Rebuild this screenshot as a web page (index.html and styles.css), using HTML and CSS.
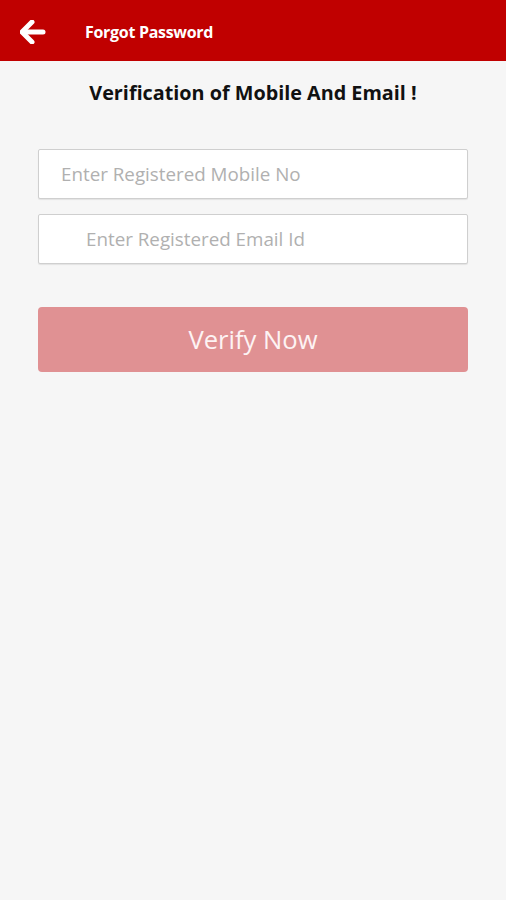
FILE: index.html
```html
<!DOCTYPE html>
<html lang="en">
<head>
    <meta charset="UTF-8">
    <meta name="viewport" content="width=device-width, initial-scale=1.0">
    <title>Forgot Password</title>
    <link rel="stylesheet" href="styles.css">
</head>
<body>
    <header class="topbar">
        <button class="back-btn" aria-label="Back">
            <svg width="26" height="24" viewBox="0 0 26 24">
                <path d="M12 2 L2 12 L12 22" fill="none" stroke="#fff" stroke-width="5" stroke-linecap="round" stroke-linejoin="round"/>
                <path d="M4 12 H23" fill="none" stroke="#fff" stroke-width="5" stroke-linecap="round"/>
            </svg>
        </button>
        <span class="topbar-title">Forgot Password</span>
    </header>

    <main class="content">
        <h2 class="heading">Verification of Mobile And Email !</h2>
        <div class="form">
            <input type="text" class="field" placeholder="Enter Registered Mobile No">
            <input type="text" class="field field-email" placeholder="Enter Registered Email Id">
            <button class="verify-btn">Verify Now</button>
        </div>
    </main>
</body>
</html>
```

FILE: styles.css
```css
body {
    margin: 0;
    background: #f6f6f6;
    font-family: "Open Sans", "Noto Sans", sans-serif;
    height: 100vh;
}
.topbar {
    height: 61px;
    background: #c00000;
    display: flex;
    align-items: center;
}
.back-btn {
    border: none;
    background: none;
    padding: 0;
    margin-left: 20px;
    margin-top: 3px;
    width: 26px;
    height: 24px;
    display: flex;
    cursor: pointer;
}
.topbar-title {
    margin-left: 39px;
    margin-top: 3px;
    color: #fff;
    font-size: 16px;
    font-weight: 700;
    letter-spacing: -0.3px;
}
.content {
    padding: 0 38px;
}
.heading {
    margin: 18px 0 0;
    text-align: center;
    font-size: 19.8px;
    font-weight: 700;
    color: #111;
    letter-spacing: 0;
}
.form {
    margin-top: 43px;
    display: flex;
    flex-direction: column;
}
.field {
    box-sizing: border-box;
    height: 50px;
    margin-bottom: 15px;
    border: 1px solid #cfcfcf;
    border-radius: 2px;
    background: #fff;
    padding: 0 22px;
    font-family: inherit;
    font-size: 18.8px;
    color: #333;
    box-shadow: 0 1px 1px rgba(0, 0, 0, 0.08);
}
.field::placeholder {
    color: #b0b0b0;
}
.field-email {
    padding-left: 47px;
}
.verify-btn {
    margin-top: 28px;
    height: 65px;
    border: none;
    border-radius: 4px;
    background: #e09193;
    color: #fdf3f3;
    font-family: inherit;
    font-size: 25.6px;
    cursor: pointer;
}
```
